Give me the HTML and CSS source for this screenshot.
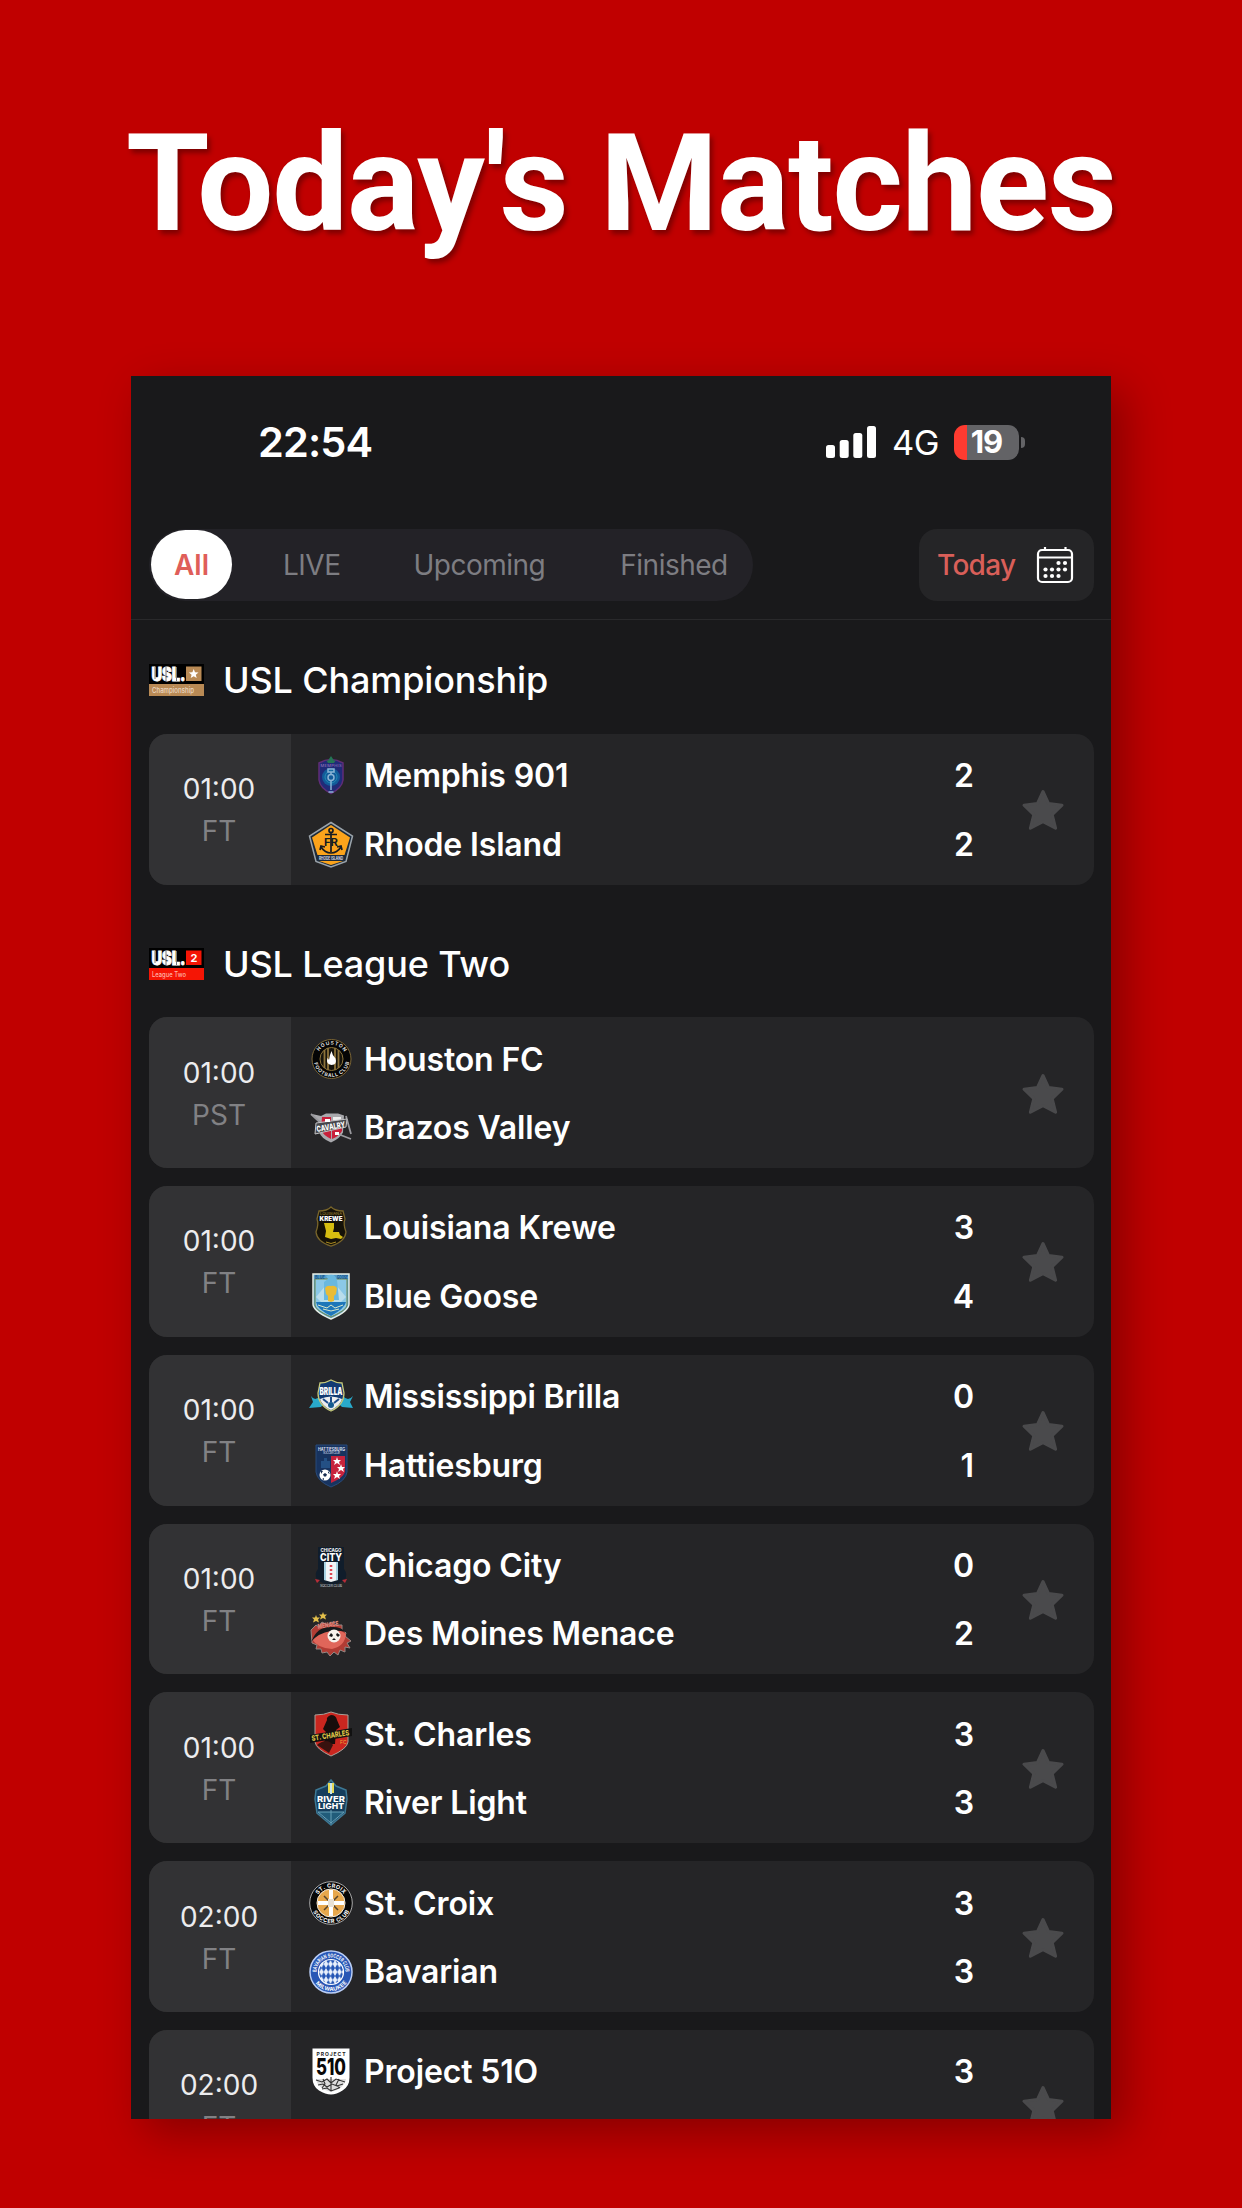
FILE: index.html
```html
<!DOCTYPE html>
<html lang="en">
<head>
<meta charset="utf-8">
<title>Today's Matches</title>
<link rel="stylesheet" href="styles.css">
</head>
<body>
<svg class="defs" aria-hidden="true">
  <symbol id="star" viewBox="0 0 44 42"><path d="M22 2.500 27.600 14.600 41 16.200 31.200 25.600 34.600 39.200 22 32.600 9.400 39.200 12.800 25.600 3 16.200 16.400 14.600Z" fill="#4a4a4c" stroke="#4a4a4c" stroke-width="3" stroke-linejoin="round"/></symbol>
</svg>
<h1 class="headline">Today's Matches</h1>
<main class="screen">
  <header class="status">
    <span class="clock">22:54</span>
    <div class="indicators">
      <svg class="signal" viewBox="0 0 50 32" fill="#fff"><rect x="0" y="19" width="9" height="13" rx="2.500"/><rect x="13.700" y="14" width="9" height="18" rx="2.500"/><rect x="27.300" y="7" width="9" height="25" rx="2.500"/><rect x="41" y="0" width="9" height="32" rx="2.500"/></svg>
      <span class="network">4G</span>
      <div class="battery"><span class="level">19</span></div>
      <span class="battery-tip"></span>
    </div>
  </header>
  <nav class="toolbar">
    <div class="tabs">
      <span class="tab tab-active">All</span>
      <span class="tab tab-live">LIVE</span>
      <span class="tab tab-upcoming">Upcoming</span>
      <span class="tab tab-finished">Finished</span>
    </div>
    <div class="today">
      <span class="today-label">Today</span>
      <svg class="calendar" viewBox="0 0 38 38" fill="none" stroke="#fff" stroke-width="2.200"><rect x="2" y="4" width="34" height="32" rx="4"/><path d="M2 11.500h34M9 1v4M29.500 1v4" /><g fill="#fff" stroke="none"><circle cx="22.500" cy="17" r="2.100"/><circle cx="29" cy="17" r="2.100"/><circle cx="9.500" cy="23.500" r="2.100"/><circle cx="16" cy="23.500" r="2.100"/><circle cx="22.500" cy="23.500" r="2.100"/><circle cx="29" cy="23.500" r="2.100"/><circle cx="9.500" cy="30" r="2.100"/><circle cx="16" cy="30" r="2.100"/><circle cx="22.500" cy="30" r="2.100"/></g></svg>
    </div>
  </nav>

  <section class="league">
    <h2 class="league-title">
      <svg class="league-logo" viewBox="0 0 55 32"><path d="M0 0h55v32H0z" fill="#000"/><path d="M37 2.500h15.500v14.500H37zM0 20h55v12H0z" fill="#b98a55"/><path d="m44.700 5 1.300 3.300 3.500.2-2.700 2.200.9 3.400-3-1.900-3 1.900.9-3.400-2.700-2.200 3.500-.2z" fill="#fff"/><text x="2.500" y="16.700" textLength="34" lengthAdjust="spacingAndGlyphs" font-size="18.500" font-weight="900" fill="#fff" stroke="#fff" stroke-width=".8">USL.</text><path d="M6 3v12M17 3v14M27.500 3v14" stroke="#777" stroke-width="1"/><text x="3" y="28.500" textLength="42" lengthAdjust="spacingAndGlyphs" font-size="7.500" fill="#ead9c4">Championship</text></svg>
      <span>USL Championship</span>
    </h2>
    <article class="match">
      <div class="when"><span class="time">01:00</span><span class="state">FT</span></div>
      <div class="teams">
        <div class="team"><svg class="crest" viewBox="0 0 46 48"><path d="M11 11q12-7 24 0v17q-1 8-12 13.500Q12 36 11 28z" fill="#202b78" stroke="#602d78" stroke-width="1.500"/><circle cx="23" cy="25" r="9" fill="#125b99"/><circle cx="23" cy="25" r="6" fill="none" stroke="#238bb5"/><path d="M18 8q2 2 3-1l2-3 2 3q1 3 3 1l-2 3h-6z" fill="#247555"/><text x="12.500" y="15" textLength="21" font-size="4" fill="#a57fc0">MEMPHIS</text><g fill="none" stroke="#8bb4d5" stroke-width="1.500"><path d="M20 17h6v3h-6zM23 20v3M23 28v10M20.500 40h5"/><circle cx="23" cy="25.500" r="3"/></g></svg><span class="name">Memphis 901</span><span class="score">2</span></div>
        <div class="team"><svg class="crest" viewBox="0 0 46 48"><path d="M23 1.500 44.500 15 38 40.500 23 46 8 40.500 1.500 15z" fill="#1c2a3a" stroke="#9aa3aa" stroke-width="1.500"/><path d="M23 4 42 16.500 36.500 34H9.500L4 16.500zM11 40h24l-12 4z" fill="#fba31b"/><g fill="none" stroke="#161b22" stroke-width="1.700"><circle cx="23" cy="9.500" r="2"/><path d="M23 12v19M17 13.500h12M13 26q4 6 10 6t10-6M12 29l1-4 4 1M34 29l-1-4-4 1"/></g><text x="16" y="24.500" font-size="10" textLength="14" lengthAdjust="spacingAndGlyphs" font-weight="700" fill="#161b22">FR</text><text x="11" y="39" font-size="4.500" textLength="24" lengthAdjust="spacingAndGlyphs" font-weight="700" fill="#dde">RHODE ISLAND</text></svg><span class="name">Rhode Island</span><span class="score">2</span></div>
      </div>
      <svg class="star"><use href="#star"/></svg>
    </article>
  </section>

  <section class="league league-next">
    <h2 class="league-title">
      <svg class="league-logo" viewBox="0 0 55 32"><path d="M0 0h55v32H0z" fill="#000"/><path d="M37 2.500h15.500v14.500H37zM0 20h55v12H0z" fill="#f51505"/><text x="41.500" y="14" font-size="11" font-weight="700" fill="#fff">2</text><text x="2.500" y="16.700" textLength="34" lengthAdjust="spacingAndGlyphs" font-size="18.500" font-weight="900" fill="#fff" stroke="#fff" stroke-width=".8">USL.</text><path d="M6 3v12M17 3v14M27.500 3v14" stroke="#777" stroke-width="1"/><text x="3" y="28.500" textLength="34" lengthAdjust="spacingAndGlyphs" font-size="7" fill="#ffb5aa">League Two</text></svg>
      <span>USL League Two</span>
    </h2>
    <article class="match">
      <div class="when"><span class="time">01:00</span><span class="state">PST</span></div>
      <div class="teams">
        <div class="team"><svg class="crest" viewBox="0 0 46 48"><circle cx="23.500" cy="23" r="19.500" fill="#050505" stroke="#7c6636"/><circle cx="23.500" cy="23" r="11.500" fill="#15130c" stroke="#8d733a"/><path d="M16.500 14v18M20 12v22M27 12v22M30.500 14v18" stroke="#8d733a" stroke-width="1.800"/><path d="M23.500 15q1 5 4 7.500 2 6-4 6.500-6-1-4-7 1 1 1.500 2 .5-5 2.500-9" fill="#fff"/><path id="hou-top" d="M9 23a14.500 14.500 0 0 1 29 0" fill="none"/><path id="hou-low" d="M5.500 23a18 18 0 0 0 36 0" fill="none"/><g font-size="5" font-weight="700" fill="#ddd"><text><textPath href="#hou-top" startOffset="8" textLength="30">HOUSTON</textPath></text><text><textPath href="#hou-low" startOffset="4" textLength="49">FOOTBALL CLUB</textPath></text></g></svg><span class="name">Houston FC</span></div>
        <div class="team"><svg class="crest" viewBox="0 0 46 48"><path d="M4 10 13 12 18 9.500h12l6 2-1 17q-3 6-12 10-10-4-12-11V18z" fill="#a9a9ad"/><path d="M14 13h9v22q-8-4-10-9zM24 22h10v5q-3 5-10 8z" fill="#c91f3a"/><path d="M25 13h8v6h-8z" fill="#eee"/><path d="m3 10 14 13M30 30l13 5M38 12l5 18" stroke="#99999e" stroke-width="1.800"/><path d="m8 19 31-4-1 8-31 7z" fill="#47474b" stroke="#c3c3c6"/><text x="9" y="28" transform="rotate(-10 9 28)" textLength="29" lengthAdjust="spacingAndGlyphs" font-size="8" font-weight="800" fill="#fff">CAVALRY</text><path d="M17 15h5v3h-5zM27 28h4v3h-4z" fill="#fff"/></svg><span class="name">Brazos Valley</span></div>
      </div>
      <svg class="star"><use href="#star"/></svg>
    </article>
    <article class="match">
      <div class="when"><span class="time">01:00</span><span class="state">FT</span></div>
      <div class="teams">
        <div class="team"><svg class="crest" viewBox="0 0 46 48"><path d="M23 3q4 4 12 4l2 8q-2 5 1 13-1 10-15 14-14-4-15-14 3-8 1-13l2-8q8 0 12-4z" fill="#151208" stroke="#79652a" stroke-width="1.300"/><text x="12" y="10.500" font-size="4" textLength="22" lengthAdjust="spacingAndGlyphs" fill="#a88c35">LOUISIANA</text><path d="M11 12h24v5H11z" fill="#171717"/><text x="11.500" y="16.500" font-size="6" textLength="23" lengthAdjust="spacingAndGlyphs" font-weight="900" fill="#fff">KREWE</text><path d="M16 19h10v5l-1 4h6l1 3 3 2-2 2-5-1-5 1-6-2 1-6z" fill="#d6be10"/><path d="M18 38q5 3 10 0" stroke="#ac8c20" fill="none"/></svg><span class="name">Louisiana Krewe</span><span class="score">3</span></div>
        <div class="team"><svg class="crest" viewBox="0 0 46 48"><path d="M5 1h36v30q0 7-18 15Q5 38 5 31z" fill="#529ccc" stroke="#e7eee5" stroke-width="1.500"/><path d="M7 6h32v26q0 5-16 12Q7 37 7 32z" fill="#8bc8e7" stroke="#71884a"/><path d="m8 24 15-18 15 18-15 15z" fill="#b9ddec"/><path d="M8 29h30q-1 6-15 14Q9 36 8 29" fill="#1e76b9"/><path d="M18 3q9-4 11 4l2 20h-15V9l4-3z" fill="#69b8df"/><path d="M17 15q2-3 6-2 4-1 6 2l-1 6-2 2v5l-3 1-3-1v-5l-2-2z" fill="#e9bc35"/><text x="7" y="5.500" font-size="4.500" textLength="10" lengthAdjust="spacingAndGlyphs" font-weight="800" fill="#19578d">BLUE</text><text x="29" y="5.500" font-size="4.500" textLength="11" lengthAdjust="spacingAndGlyphs" font-weight="800" fill="#19578d">GOOSE</text><path d="m10 32 9 3 4-3 4 3 8-3M15 36l8 2 8-2" stroke="#dce9ca" fill="none"/></svg><span class="name">Blue Goose</span><span class="score">4</span></div>
      </div>
      <svg class="star"><use href="#star"/></svg>
    </article>
    <article class="match">
      <div class="when"><span class="time">01:00</span><span class="state">FT</span></div>
      <div class="teams">
        <div class="team"><svg class="crest" viewBox="0 0 46 48"><path d="M12 23Q7 29 3 23l2 6-4 6 12-1 4-5zM35 23q5 6 10 0l-3 6 3 6-11-1-5-5z" fill="#29aacb"/><path d="M12 10q6 0 11-3 5 3 11 3l2 10q0 12-13 18Q10 32 10 20z" fill="#113a73" stroke="#c5c879" stroke-width="1.300"/><path d="M12 26q11-5 22 0-2 7-11 11-9-4-11-11" fill="#eee"/><path d="m15 26 5 4m11-4-5 4m-3-6v5" stroke="#1b4b8a" stroke-width="2"/><circle cx="23" cy="32" r="3" fill="#155a90"/><text x="11.500" y="22" font-size="10" textLength="23" lengthAdjust="spacingAndGlyphs" font-weight="900" fill="#fff">BRILLA</text></svg><span class="name">Mississippi Brilla</span><span class="score">0</span></div>
        <div class="team"><svg class="crest" viewBox="0 0 46 48"><path d="M8 3h31v27q-1 9-16 15Q9 39 8 30z" fill="#17335f" stroke="#294b7a"/><path d="M23 14h14v16q-2 6-14 11z" fill="#c7233d"/><path d="M13 19h3v-3h3v3h3v7h-9z" fill="#245084"/><circle cx="17" cy="33" r="5.500" fill="#fff"/><path d="m17 31 2 1.500-1 2h-2l-1-2zM13 29l2 0-2 3zM20 29l2 3-2-1zM14 37l2-1 0 2z" fill="#152b50"/><text x="10" y="8.500" font-size="4.500" textLength="27" lengthAdjust="spacingAndGlyphs" font-weight="700" fill="#d8dfed">HATTIESBURG</text><text x="15" y="12" font-size="3" textLength="17" fill="#d8dfed">SOCCER CLUB</text><path id="hat-star" d="m29 15 1 3h3l-2 2 1 3-3-2-3 2 1-3-2-2h3z" fill="#fff"/><use href="#hat-star" x="4" y="7"/><use href="#hat-star" y="14"/></svg><span class="name">Hattiesburg</span><span class="score">1</span></div>
      </div>
      <svg class="star"><use href="#star"/></svg>
    </article>
    <article class="match">
      <div class="when"><span class="time">01:00</span><span class="state">FT</span></div>
      <div class="teams">
        <div class="team"><svg class="crest" viewBox="0 0 46 48"><path d="M10 5h26v22q4 5 1 11l-14 7-14-7q-3-6 1-11z" fill="#101d2b"/><text x="12.500" y="10" font-size="5" textLength="21" lengthAdjust="spacingAndGlyphs" font-weight="700" fill="#fff">CHICAGO</text><text x="12" y="18.500" font-size="10" textLength="22" lengthAdjust="spacingAndGlyphs" font-weight="800" fill="#fff">CITY</text><path d="M16 20h14v18l-7 2-7-2z" fill="#f2f5f7"/><path d="M17 20v18m12-18v18" stroke="#a8d3e4" stroke-width="2"/><path d="M23 23v16" stroke="#df4855" stroke-width="2.500" stroke-dasharray="2 2"/><path d="m7 37 5 1-3 3zM39 37l-5 1 3 3z" fill="#b62d38"/><text x="12" y="45" font-size="3.500" textLength="22" fill="#c8d0da">SOCCER CLUB</text></svg><span class="name">Chicago City</span><span class="score">0</span></div>
        <div class="team"><svg class="crest" viewBox="0 0 46 48"><path d="m4 33-1-13 5-5 3 2 3-5 5 3 5-3 4 3 6 0 0 4 4 4-1 3 6 5-4 2 3 5-5-1 0 5-5-2-2 5-4-3-4 4-3-4-5 1-1-4-5 0 1-4z" fill="#b13c34" stroke="#958783"/><path d="M4 29q15-18 34-5-1 12-14 15Q9 38 4 29" fill="#e0665a"/><path d="M3 32q7-17 22-15 8 0 13 5-8-2-15-1Q10 23 3 32" fill="#18191b"/><circle cx="26" cy="26" r="6.500" fill="#f7f2ec"/><path d="m23 23 2 2-1 2-3-1zM29 23l3 2-2 2-2-2zM26 28l2 2h-4z" fill="#161616"/><text x="10" y="19" transform="rotate(-9 10 19)" font-size="7" textLength="21" lengthAdjust="spacingAndGlyphs" font-weight="900" fill="#d88178">MENACE</text><path d="m8 5 1 2.500 3 0-2 2 1 3-3-1.500-3 1.500 1-3-2-2 3 0zM15 2l1 2.500 3 0-2 2 1 3-3-1.500-3 1.500 1-3-2-2 3 0z" fill="#e3bf4a"/></svg><span class="name">Des Moines Menace</span><span class="score">2</span></div>
      </div>
      <svg class="star"><use href="#star"/></svg>
    </article>
    <article class="match">
      <div class="when"><span class="time">01:00</span><span class="state">FT</span></div>
      <div class="teams">
        <div class="team"><svg class="crest" viewBox="0 0 46 48"><path d="M7 4q9 0 16-3 7 3 17 3v27q-1 7-17 14Q8 38 7 31z" fill="#ca261f" stroke="#a9a19a"/><path d="M19 9q-1-3 4-5 5 0 6 5l3 7-4 3-1 14H16l2-12-3-3z" fill="#180d0c"/><path d="M9 34q10-8 16 0l-4 8" fill="#38120f"/><path d="m2 24 42-7v8L2 32z" fill="#111"/><text x="4" y="30" transform="rotate(-9 4 30)" font-size="7.500" textLength="38" lengthAdjust="spacingAndGlyphs" font-weight="800" fill="#dfc447">ST. CHARLES</text><text x="32" y="33" font-size="5" fill="#ecaa36">FC</text></svg><span class="name">St. Charles</span><span class="score">3</span></div>
        <div class="team"><svg class="crest" viewBox="0 0 46 48"><path d="M23 1 28 7l10 4 1 9-2 14-14 12L9 34 7 20l1-9 10-4z" fill="#153e5d" stroke="#3d7894" stroke-width="1.500"/><path d="M20 4h6v10h-6z" fill="#e6da54"/><path d="M22 4h2v11h-2z" fill="#c9e7ee"/><path d="M10 33h26L23 44zM23 31v14" stroke="#69a1b7" fill="#215c7a"/><text x="9" y="23" textLength="28" lengthAdjust="spacingAndGlyphs" font-size="8" font-weight="800" fill="#fff">RIVER</text><text x="10" y="30" textLength="26" lengthAdjust="spacingAndGlyphs" font-size="8" font-weight="800" fill="#fff">LIGHT</text></svg><span class="name">River Light</span><span class="score">3</span></div>
      </div>
      <svg class="star"><use href="#star"/></svg>
    </article>
    <article class="match">
      <div class="when"><span class="time">02:00</span><span class="state">FT</span></div>
      <div class="teams">
        <div class="team"><svg class="crest" viewBox="0 0 46 48"><circle cx="23" cy="23" r="21.300" fill="#080808" stroke="#aaa"/><circle cx="23" cy="23" r="14" fill="#e7a74c" stroke="#f1e8da"/><path d="M23 10v26M10 23h26" stroke="#fff" stroke-width="4"/><path d="m16 16 14 14M30 16 16 30" stroke="#57442d" stroke-width="1.500"/><path d="M20 19h6v8h-6z" fill="#e9e1d4"/><path id="cro-top" d="M7.500 23a15.500 15.500 0 0 1 31 0" fill="none"/><path id="cro-low" d="M3 23a20 20 0 0 0 40 0" fill="none"/><g font-size="5.500" font-weight="700" fill="#fff"><text><textPath href="#cro-top" startOffset="9" textLength="30">ST. CROIX</textPath></text><text><textPath href="#cro-low" startOffset="9" textLength="45">SOCCER CLUB</textPath></text></g></svg><span class="name">St. Croix</span><span class="score">3</span></div>
        <div class="team"><svg class="crest" viewBox="0 0 46 48"><defs><pattern id="lozenge" width="4.500" height="8" patternUnits="userSpaceOnUse"><path d="M0 0h4.500v8H0z" fill="#e8f0fc"/><path d="m2.250 0 2.250 4-2.250 4L0 4z" fill="#2355b4"/></pattern></defs><circle cx="23" cy="24" r="21" fill="#2857b5" stroke="#b9cdf5" stroke-width="1.500"/><circle cx="23" cy="24" r="12.500" fill="url(#lozenge)" stroke="#fff" stroke-width="1.200"/><path id="bav-top" d="M8.500 24a14.500 14.500 0 0 1 29 0" fill="none"/><path id="bav-low" d="M4 24a19 19 0 0 0 38 0" fill="none"/><g font-size="5.500" font-weight="700" fill="#fff"><text><textPath href="#bav-top" textLength="45" lengthAdjust="spacingAndGlyphs">BAVARIAN SOCCER CLUB</textPath></text><text><textPath href="#bav-low" startOffset="12" textLength="36">MILWAUKEE</textPath></text></g></svg><span class="name">Bavarian</span><span class="score">3</span></div>
      </div>
      <svg class="star"><use href="#star"/></svg>
    </article>
    <article class="match">
      <div class="when"><span class="time">02:00</span><span class="state">FT</span></div>
      <div class="teams">
        <div class="team"><svg class="crest" viewBox="0 0 46 48"><path d="M4.500.5h37v29q0 9-7 13-6 4-11.500 4T11 42.500q-6.500-4-6.500-13z" fill="#fff"/><text x="8.500" y="7.500" font-size="5" textLength="29" font-weight="700" fill="#222">PROJECT</text><text x="8" y="27" font-size="23" textLength="30" lengthAdjust="spacingAndGlyphs" font-weight="800" fill="#080808">510</text><path d="M8 31h30q-1 9-15 13Q9 40 8 31" fill="#ddd"/><path d="m8 32 6 2 5-3 4 4 5-4 9 3M10 37l5-1 4 3 5-3 5 2 6-2M14 41l5-1 4 3 8-3M15 31l2 5-3 4M31 31l-3 6 4 3M23 29v14" stroke="#333" stroke-width="1.100" fill="none"/></svg><span class="name">Project 51O</span><span class="score">3</span></div>
        <div class="team"><svg class="crest" viewBox="0 0 46 48"><circle cx="23" cy="25" r="22" fill="#17191d" stroke="#aaa" stroke-width="1.500"/></svg></div>
      </div>
      <svg class="star"><use href="#star"/></svg>
    </article>
  </section>
</main>
</body>
</html>
```
FILE: styles.css
```css
* { box-sizing: border-box; }
html, body { margin: 0; }
body {
  display: flex;
  flex-direction: column;
  align-items: center;
  width: 1242px;
  height: 2208px;
  padding-bottom: 89px;
  overflow: hidden;
  background: #c00000;
  font-family: Inter, "Liberation Sans", sans-serif;
  color: #fff;
}
.defs { position: absolute; width: 0; height: 0; }
.headline {
  flex: none;
  height: 376px;
  margin: 0;
  padding-top: 105px;
  font: 700 135px/158px Roboto, "Liberation Sans", sans-serif;
  letter-spacing: -1.200px;
  white-space: nowrap;
  text-shadow: 3px 4px 5px rgba(0, 0, 0, .35);
}
.screen {
  flex: none;
  width: 980px;
  height: 1743px;
  overflow: hidden;
  background: #19191b;
  box-shadow: 14px 14px 42px rgba(0, 0, 0, .3);
}
.status {
  display: flex;
  justify-content: space-between;
  align-items: center;
  height: 153px;
  padding: 0 86px 21px 127px;
}
.clock { font-size: 41.500px; font-weight: 600; letter-spacing: -.9px; }
.indicators { display: flex; align-items: center; }
.signal { flex: none; width: 50px; height: 32px; }
.network { flex: none; width: 78px; padding-left: 16px; font-size: 34.500px; letter-spacing: -.5px; }
.battery {
  flex: none;
  width: 65px;
  height: 35px;
  border-radius: 11px;
  background: linear-gradient(90deg, #ff3b30 13px, #636366 13px);
  text-align: center;
}
.level { font-size: 31px; line-height: 34px; font-weight: 700; letter-spacing: -1px; }
.battery-tip { width: 4px; height: 11px; margin-left: 2px; border-radius: 0 5px 5px 0; background: #636366; }

.toolbar {
  display: flex;
  justify-content: space-between;
  height: 91px;
  padding: 0 17px 0 18px;
  border-bottom: 1px solid #29292b;
}
.tabs {
  display: flex;
  align-items: center;
  width: 604px;
  height: 72px;
  padding-left: 2px;
  border-radius: 36px;
  background: #232227;
  font-size: 28px;
  letter-spacing: -.5px;
  color: #7d7d82;
}
.tab-active {
  display: grid;
  place-items: center;
  width: 81px;
  height: 69px;
  margin-bottom: 1px;
  border-radius: 35px;
  background: #fff;
  color: #df5e59;
  font-weight: 600;
  letter-spacing: 0;
}
.tab-live { margin-left: 51px; }
.tab-upcoming { margin-left: 73px; }
.tab-finished { margin-left: 75px; }
.today {
  display: flex;
  align-items: center;
  justify-content: space-between;
  width: 175px;
  height: 72px;
  padding: 0 20px 0 18px;
  border-radius: 18px;
  background: #252527;
}
.today-label { font-size: 28px; font-weight: 500; letter-spacing: -.7px; color: #d95f59; }
.calendar { width: 38px; height: 38px; }

.league { padding: 0 17px 0 18px; }
.league-title {
  display: flex;
  align-items: center;
  gap: 19px;
  height: 114px;
  margin: 0;
  padding-top: 6px;
  font-size: 36px;
  font-weight: 540;
  letter-spacing: -.15px;
}
.league-next .league-title { height: 132.500px; padding-top: 25px; }
.league-logo { width: 55px; height: 32px; letter-spacing: 0; }
.match {
  display: flex;
  align-items: center;
  height: 150.800px;
  margin-bottom: 18px;
  padding-right: 29px;
  overflow: hidden;
  border-radius: 18px;
  background: #252527;
}
.league:not(.league-next) .match { margin-bottom: 0; }
.when {
  display: flex;
  flex-direction: column;
  align-items: center;
  justify-content: center;
  width: 142px;
  height: 100%;
  padding: 2px 2px 0 0;
  background: #323234;
  font-size: 28px;
  line-height: 42px;
}
.time { color: #ececee; }
.state { color: #818184; }
.teams { flex: 1; height: 100%; padding-top: 8px; }
.team { display: flex; align-items: center; height: 68.500px; padding: 0 47px 0 17px; }
.crest { width: 46px; height: 48px; margin-right: 10px; }
.name { flex: 1; padding-bottom: 1px; font-size: 32px; font-weight: 560; letter-spacing: -.15px; white-space: nowrap; }
.score { padding-bottom: 1px; font-size: 32px; font-weight: 600; }
.star { width: 44px; height: 42px; margin-top: 2px; }
```
